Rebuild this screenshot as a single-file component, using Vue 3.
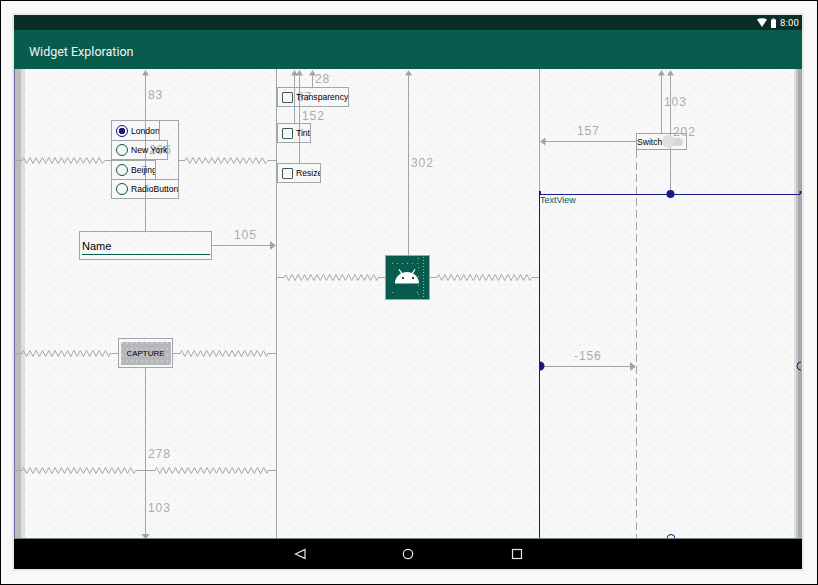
<template>
  <div class="frame">
    <div class="device">
      <div class="status-bar">
        <svg class="status-icons" width="20" height="10" viewBox="0 0 20 10">
          <path d="M0 1.500C3-.3 7-.3 10 1.500L5 9z" fill="#fff" />
          <path d="M14 2.500V1.500h1.500V.5h2v1H19V10h-5z" fill="#fff" />
        </svg>
        <span class="clock">8:00</span>
      </div>
      <div class="app-bar">Widget Exploration</div>

      <div class="canvas">
        <div class="strip-left"></div>
        <div class="strip-right"></div>

        <svg class="wires" width="788" height="470" viewBox="14 69 788 470">
          <!-- constraints -->
          <path v-for="(d, i) in wires" :key="i" :d="d" class="wire" />
          <path d="M636.500 150V538" class="wire dashed" />
          <path v-for="z in zigzags" :key="z.join('-')" :d="zigzag(z[0], z[1], z[2])" class="zig" />
          <path v-for="(d, i) in arrows" :key="'a' + i" :d="d" class="arrow" />

          <text v-for="l in labels" :key="l.t + l.x" :x="l.x" :y="l.y" class="dim">{{ l.t }}</text>

          <!-- selected textview -->
          <path d="M539.500 193V538M540 194.500H800" class="sel" />
          <path d="M539 191h2v3h-2zM799.500 191h2v3h-2z" class="handle" />
          <circle cx="670.500" cy="194" r="4" class="handle" />
          <path d="M540 361.500a4.500 4.500 0 0 1 0 9z" class="handle" />
          <path d="M801 362a4 4 0 0 0 0 8" class="sel" />
          <path d="M667 538.500a4 4 0 0 1 8 0" class="sel" />
        </svg>

        <div v-for="r in radios" :key="r.label" class="node radio" :style="place(r)">
          <span class="radio-dot" :class="{ on: r.on }"></span>
          <span class="node-text">{{ r.label }}</span>
        </div>
        <div class="node" :style="place(radioGroup)"></div>

        <div class="node name-field" :style="place(nameField)">
          <span>Name</span>
        </div>

        <div class="node capture" :style="place(capture)">
          <div class="capture-btn">CAPTURE</div>
        </div>

        <div v-for="c in checks" :key="c.label" class="node check" :style="place(c)">
          <span class="check-box"></span>
          <span class="node-text">{{ c.label }}</span>
        </div>

        <div class="node image" :style="place(image)">
          <svg width="43" height="43" viewBox="0 0 43 43">
            <path d="M9 27.500c0-5 2.500-8 6-10L12.500 13.500l1-.6 2.700 4c3-1.200 6.600-1.200 9.600 0l2.700-4 1 .6-2.500 4c3.500 2 6 5 6 10z" fill="#fff" />
            <path d="M16 21h2v2h-2zM26 21h2v2h-2z" fill="#075c4e" />
            <rect v-for="d in imageDots" :key="d.join()" :x="d[0]" :y="d[1]" width="1" height="1" fill="#8fb5ad" />
            <path d="M14 30h1v1h-1zM17 30h1v1h-1zM21 30h1v1h-1zM17 34h1v1h-1z" fill="#0a2e25" />
          </svg>
        </div>

        <div class="node switch" :style="place(switchNode)">
          <span class="node-text">Switch</span>
          <span class="track"></span>
          <span class="thumb"></span>
        </div>

        <div class="textview">TextView</div>
      </div>

      <div class="nav-bar">
        <svg width="232" height="14" viewBox="0 0 232 14">
          <path d="M13 2.500V11.500L3.500 7z" class="nav-icon" />
          <circle cx="116" cy="7" r="4.700" class="nav-icon" />
          <rect x="220.500" y="2.500" width="9" height="9" class="nav-icon" />
        </svg>
      </div>
    </div>
  </div>
</template>

<script setup>
const wires = [
  'M145.500 72V232', 'M145.500 367V536',
  'M276.500 69V538',
  'M294.500 72V123', 'M299.500 72V163', 'M312.500 72V87',
  'M408.500 72V255',
  'M539.500 69V193',
  'M661.500 72V134', 'M670.500 72V190',
  'M211 245.500H272',
  'M636 141.500H543',
  'M541 366.500H632',
  'M105 160.500H111', 'M178 160.500H185', 'M268 160.500H276',
  'M14 353.500H22', 'M110 353.500H118', 'M172 353.500H180', 'M268 353.500H276',
  'M14 470.500H22', 'M136 470.500H155', 'M268 470.500H276',
  'M276 277.500H284', 'M378 277.500H385', 'M430 277.500H437', 'M532 277.500H539',
  'M14 160.500H22'
]

const zigzags = [
  [22, 105, 160.5], [185, 268, 160.5],
  [22, 110, 353.5], [180, 268, 353.5],
  [22, 136, 470.5], [155, 268, 470.5],
  [284, 378, 277.5], [437, 532, 277.5]
]

function zigzag(x1, x2, y) {
  const step = 3.15
  let d = `M${x1} ${y}`
  let x = x1 + step / 2
  let up = true
  while (x < x2) {
    d += `L${x.toFixed(2)} ${y + (up ? -3 : 3)}`
    up = !up
    x += step
  }
  return d + `L${x2} ${y}`
}

function upArrow(x) {
  return `M${x} 70l3.500 5.500h-7z`
}

const arrows = [
  upArrow(145.5), upArrow(294.5), upArrow(299.5), upArrow(312.5),
  upArrow(408.5), upArrow(661.5), upArrow(670.5),
  'M145.500 539.500l-4-5.500h8z',
  'M276 245.500l-6-4.500v9z',
  'M540 141.500l5.500-4v8z',
  'M636 366.500l-6-4.500v9z'
]

const labels = [
  { t: '83', x: 148, y: 99 },
  { t: '266', x: 149, y: 154 },
  { t: '105', x: 234, y: 239 },
  { t: '278', x: 148, y: 458 },
  { t: '103', x: 148, y: 512 },
  { t: '28', x: 315, y: 83 },
  { t: '87', x: 297, y: 101 },
  { t: '152', x: 302, y: 120 },
  { t: '302', x: 411, y: 167 },
  { t: '157', x: 577, y: 135 },
  { t: '103', x: 664, y: 106 },
  { t: '202', x: 673, y: 136 },
  { t: '-156', x: 574, y: 360 }
]

// page coordinates of the widgets, the canvas starts at 14,69
const place = n => ({
  left: n.x - 14 + 'px',
  top: n.y - 69 + 'px',
  width: n.w + 'px',
  height: n.h + 'px'
})

const radioGroup = { x: 111, y: 120, w: 68, h: 79 }
const radios = [
  { label: 'London', x: 111, y: 120, w: 49, h: 21, on: true },
  { label: 'New York', x: 111, y: 140, w: 57, h: 20 },
  { label: 'Beijing', x: 111, y: 160, w: 45, h: 20 },
  { label: 'RadioButton', x: 111, y: 179, w: 68, h: 20 }
]
const nameField = { x: 79, y: 231, w: 133, h: 29 }
const capture = { x: 118, y: 338, w: 55, h: 30 }
const checks = [
  { label: 'Transparency', x: 277, y: 87, w: 72, h: 20 },
  { label: 'Tint', x: 277, y: 123, w: 34, h: 20 },
  { label: 'Resize', x: 277, y: 163, w: 44, h: 20 }
]
const image = { x: 385, y: 255, w: 45, h: 45 }
const switchNode = { x: 636, y: 133, w: 51, h: 17 }

// speckle left on the launcher image
const imageDots = []
for (let y = 1; y < 42; y += 3) imageDots.push([37, y])
for (let y = 2; y < 42; y += 9) imageDots.push([32, y])
for (let x = 6; x < 36; x += 5) imageDots.push([x, 7])
imageDots.push([6, 36], [31, 36])
</script>

<style>
html, body { margin: 0; background: #f8f8f8; }
</style>

<style scoped>
.frame {
  box-sizing: border-box;
  width: 818px;
  height: 585px;
  border: 1px solid #000;
  background: #f8f8f8;
  padding: 14px 15px 15px 13px;
  font-family: Roboto, "Liberation Sans", sans-serif;
}

.device {
  height: 100%;
  display: flex;
  flex-direction: column;
  box-shadow: 0 0 0 2px #e8e8e8;
}

.status-bar {
  height: 15px;
  background: #0a2e25;
  display: flex;
  align-items: center;
  justify-content: flex-end;
  gap: 3px;
  padding-right: 3px;
  color: #fff;
  flex-shrink: 0;
}
.status-icons { display: block; }
.clock { font-size: 9.500px; letter-spacing: 0.2px; }

.app-bar {
  height: 39px;
  background: #075c4e;
  color: #f4f4f4;
  font-size: 12.500px;
  line-height: 43px;
  padding-left: 15px;
  flex-shrink: 0;
}

.canvas {
  position: relative;
  flex: 1;
  overflow: hidden;
  background-color: #f8f8f8;
  background-image:
    radial-gradient(circle at 1px 1px, #ededed 0.6px, transparent 1px),
    radial-gradient(circle at 1px 1px, #ededed 0.6px, transparent 1px);
  background-size: 10px 10px;
  background-position: 0 0, 5px 5px;
  border-bottom: 1px solid #6f8a84;
}

.strip-left {
  position: absolute;
  left: 0;
  top: 0;
  bottom: 0;
  width: 11px;
  background: linear-gradient(90deg, #6a6aa8 0 1px, #bbbbc0 1px 7px, #dedee0 7px 11px);
}
.strip-right {
  position: absolute;
  right: 0;
  top: 0;
  bottom: 0;
  width: 8px;
  background: linear-gradient(90deg, #e0e0e0 0 2px, #c6c6c8 2px 4px, #a5a9ab 4px 8px);
}

.wires {
  position: absolute;
  left: 0;
  top: 0;
  display: block;
}
.wire { stroke: #a2a6a8; stroke-width: 1; fill: none; }
.dashed { stroke-dasharray: 8 4; }
.zig { stroke: #a8a8a8; stroke-width: 1; fill: none; }
.arrow { fill: #a2a6a8; }
.dim {
  font-family: "Liberation Sans", Arial, sans-serif;
  font-size: 12px;
  letter-spacing: 0.9px;
  fill: #a8acae;
}
.sel { stroke: #1a1a80; stroke-width: 1; fill: none; }
.handle { fill: #1a1a80; }

.node {
  position: absolute;
  box-sizing: border-box;
  border: 1px solid #a2a6a8;
  display: flex;
  align-items: center;
  overflow: hidden;
  white-space: nowrap;
}
.node-text {
  font-family: "Liberation Sans", Arial, sans-serif;
  font-size: 8.600px;
  color: #000;
}

.radio-dot {
  box-sizing: border-box;
  width: 12px;
  height: 12px;
  margin: 0 3px 0 4px;
  border-radius: 50%;
  border: 1.500px solid #075c4e;
  flex-shrink: 0;
}
.radio-dot.on {
  border-color: #1a1a80;
  background: radial-gradient(circle, #1a1a80 0 3px, #f8f8f8 3.500px);
}

.name-field {
  align-items: flex-start;
  padding: 8px 0 0 2px;
  font-family: "Liberation Sans", Arial, sans-serif;
  font-size: 11px;
  color: #000;
}
.name-field::after {
  content: "";
  position: absolute;
  left: 2px;
  right: 1px;
  top: 22px;
  height: 1px;
  background: #075c4e;
}

.capture { justify-content: center; }
.capture-btn {
  width: 50px;
  height: 23px;
  background-color: #b6b7bb;
  background-image: radial-gradient(circle at 1px 1px, #cfcfd2 0.6px, transparent 1px);
  background-size: 5px 6px;
  border-radius: 1px;
  text-align: center;
  line-height: 23px;
  font-family: "Liberation Sans", Arial, sans-serif;
  font-size: 8px;
  color: #000;
}

.check-box {
  box-sizing: border-box;
  width: 11px;
  height: 11px;
  margin: 0 3px 0 4px;
  border: 1.500px solid #3c5a54;
  border-radius: 1px;
  flex-shrink: 0;
}

.image {
  background: #075c4e;
}

.switch { padding-left: 0; }
.track {
  position: absolute;
  left: 31px;
  top: 4px;
  width: 15px;
  height: 8px;
  border-radius: 4px;
  background: #d6d6d6;
}
.thumb {
  position: absolute;
  left: 25px;
  top: 1px;
  width: 13px;
  height: 13px;
  border-radius: 50%;
  background: #dedede;
}

.textview {
  position: absolute;
  left: 526px;
  top: 126px;
  font-family: "Liberation Sans", Arial, sans-serif;
  font-size: 9px;
  line-height: 10px;
  color: #075c4e;
}

.nav-bar {
  height: 30px;
  background: #000;
  flex-shrink: 0;
  display: flex;
  align-items: center;
  justify-content: center;
}
.nav-bar svg { display: block; }
.nav-icon { fill: none; stroke: #e8e8e8; stroke-width: 1.200; }
</style>
